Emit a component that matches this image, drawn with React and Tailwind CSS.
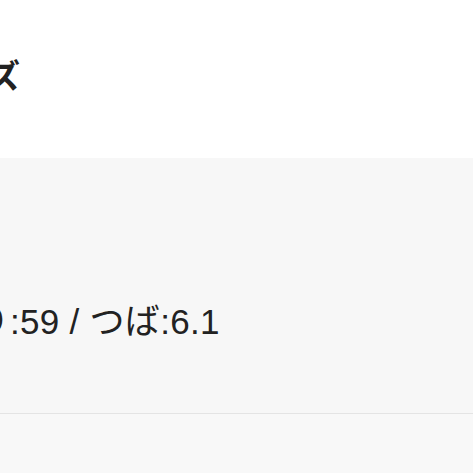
const font = { fontFamily: '"Noto Sans CJK JP", "Noto Sans", sans-serif' }
const specFont = { fontFamily: '"Liberation Sans", "Noto Sans CJK JP", sans-serif' }

const App = () => {
    return (
        <div className="w-[473px] h-[473px] overflow-hidden bg-[#f8f8f8] text-[#222]" style={font}>
            {/* header */}
            <div className="h-[158px] bg-white pt-[50px] overflow-hidden">
                <h1 className="text-[33px] font-bold leading-[48px] whitespace-nowrap -ml-[78px]">サイズ</h1>
            </div>

            {/* spec block */}
            <div className="h-[256px] bg-[#f7f7f7] border-b border-[#e4e4e4] pt-[144px] overflow-hidden">
                <p className="text-[35px] leading-[40px] tracking-[0.3px] whitespace-nowrap -ml-[96px]" style={specFont}>刃渡り:59 / つば:6.1</p>
            </div>

            <div className="h-[59px] bg-[#f8f8f8]"></div>
        </div>
    )
}

export default App
